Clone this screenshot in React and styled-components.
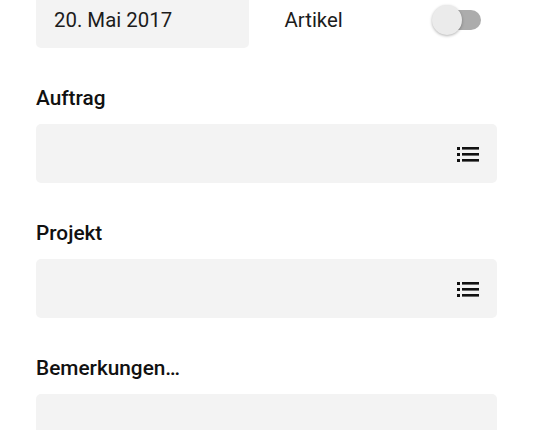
import React from 'react'
import styled, { createGlobalStyle } from 'styled-components'

const GlobalStyle = createGlobalStyle`
  html, body {
    margin: 0;
    padding: 0;
    background: #ffffff;
    overflow: hidden;
  }
  body {
    font-family: Roboto, 'Noto Sans', sans-serif;
    color: #161616;
  }
`

const Page = styled.div`
  width: 534px;
  height: 430px;
  box-sizing: border-box;
  padding: 0 37px 0 36px;
  overflow: hidden;
`

const Scroller = styled.div`
  margin-top: -12px;
`

const TopRow = styled.div`
  display: grid;
  grid-template-columns: 1fr 1fr;
  column-gap: 36px;
  align-items: center;
`

const DateBox = styled.div`
  height: 60px;
  background: #f3f3f3;
  border-radius: 5px;
  display: flex;
  align-items: center;
  padding: 4px 18px 0;
  box-sizing: border-box;
  font-size: 20.4px;
  color: #1c1c1c;
`

const SwitchRow = styled.div`
  display: flex;
  align-items: center;
  justify-content: space-between;
  padding-right: 16px;
  padding-top: 4px;
  font-size: 20.4px;
  color: #1c1c1c;
`

const Track = styled.div`
  position: relative;
  width: 42px;
  height: 20px;
  border-radius: 10px;
  background: ${p => (p.on ? '#7fb2e6' : '#acacac')};
`

const Thumb = styled.div`
  position: absolute;
  top: -5px;
  left: ${p => (p.on ? '18px' : '-7px')};
  width: 30px;
  height: 30px;
  border-radius: 50%;
  background: #ebebeb;
  box-shadow: 0 1px 3px rgba(0, 0, 0, 0.3);
`

const Section = styled.div`
  margin-top: 38px;
`

const Label = styled.div`
  font-size: 20.8px;
  font-weight: 500;
  line-height: 24px;
  color: #111;
  margin-bottom: 14px;
`

const Field = styled.div`
  height: 59px;
  background: #f3f3f3;
  border-radius: 5px;
  display: flex;
  align-items: center;
  justify-content: flex-end;
  padding-right: 18px;
`

const ListIcon = () => (
  <svg width='22' height='16' viewBox='0 0 22 16'>
    <rect x='0' y='1' width='3' height='3' fill='#111' />
    <rect x='0' y='7' width='3' height='3' fill='#111' />
    <rect x='0' y='13' width='3' height='3' fill='#111' />
    <rect x='5' y='1' width='17' height='2.6' fill='#111' />
    <rect x='5' y='7' width='17' height='2.6' fill='#111' />
    <rect x='5' y='13' width='17' height='2.6' fill='#111' />
  </svg>
)

const Switch = ({ on }) => (
  <Track on={on}>
    <Thumb on={on} />
  </Track>
)

export default function App () {
  return (
    <Page>
      <GlobalStyle />
      <Scroller>
        <TopRow>
          <DateBox>20. Mai 2017</DateBox>
          <SwitchRow>
            Artikel
            <Switch on={false} />
          </SwitchRow>
        </TopRow>
        <Section>
          <Label>Auftrag</Label>
          <Field><ListIcon /></Field>
        </Section>
        <Section>
          <Label>Projekt</Label>
          <Field><ListIcon /></Field>
        </Section>
        <Section>
          <Label>Bemerkungen…</Label>
          <Field />
        </Section>
      </Scroller>
    </Page>
  )
}
